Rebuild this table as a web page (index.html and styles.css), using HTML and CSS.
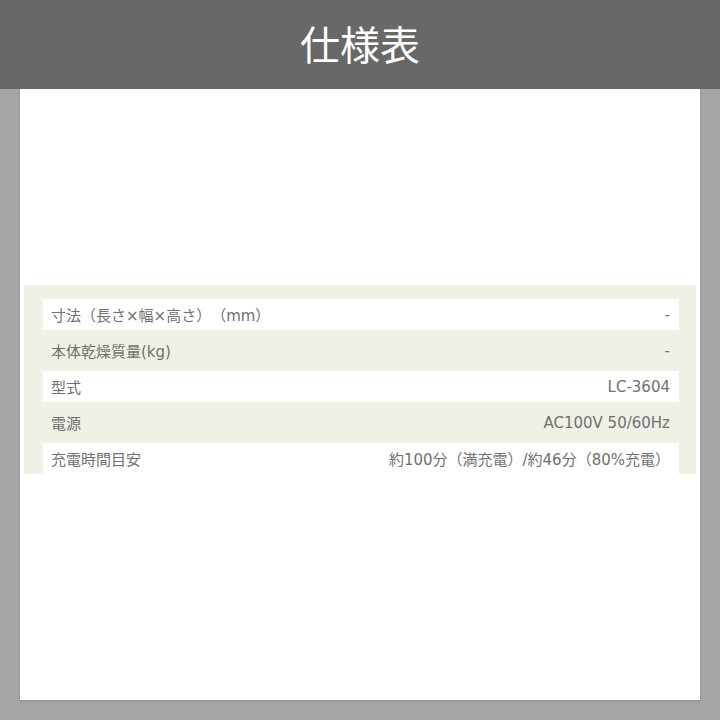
FILE: index.html
```html
<!DOCTYPE html>
<html lang="ja">
<head>
<meta charset="utf-8">
<title>仕様表</title>
<link rel="stylesheet" href="styles.css">
</head>
<body>
<header class="header"><h1 class="title">仕様表</h1></header>
<main class="panel">
  <div class="spec">
    <div class="row row-white"><span class="label">寸法（長さ×幅×高さ）（mm）</span><span class="value">-</span></div>
    <div class="row row-beige"><span class="label">本体乾燥質量(kg)</span><span class="value">-</span></div>
    <div class="row row-white"><span class="label">型式</span><span class="value">LC-3604</span></div>
    <div class="row row-beige"><span class="label">電源</span><span class="value">AC100V 50/60Hz</span></div>
    <div class="row row-white"><span class="label">充電時間目安</span><span class="value">約100分（満充電）/約46分（80%充電）</span></div>
  </div>
</main>
</body>
</html>
```
FILE: styles.css
```css
html, body {
  margin: 0;
  padding: 0;
}
body {
  width: 720px;
  height: 720px;
  background: #a6a6a6;
  font-family: "Noto Sans CJK JP", "Noto Sans", sans-serif;
  overflow: hidden;
}
.header {
  height: 89px;
  background: #686868;
  display: flex;
  align-items: center;
  justify-content: center;
}
.title {
  margin: 0;
  color: #ffffff;
  font-size: 40px;
  font-weight: 400;
  line-height: 1;
  padding-bottom: 4px;
}
.panel {
  margin: 0 20px;
  height: 611px;
  background: #ffffff;
  padding: 196px 4px 0 4px;
  box-sizing: border-box;
  box-shadow: 0 1px 3px rgba(0,0,0,0.15);
}
.spec {
  background: #f0f0e6;
  padding: 14px 17px 0 19px;
  display: flex;
  flex-direction: column;
}
.row {
  display: flex;
  align-items: center;
  justify-content: space-between;
  padding: 0 9px 0 8px;
  color: #707070;
  font-family: "DejaVu Sans", "Noto Sans CJK JP", sans-serif;
  font-size: 15px;
  text-spacing-trim: space-all;
  white-space: nowrap;
}
.row-white {
  background: #ffffff;
  height: 31px;
}
.row-beige {
  height: 41px;
}
.value {
  text-align: right;
}
```
